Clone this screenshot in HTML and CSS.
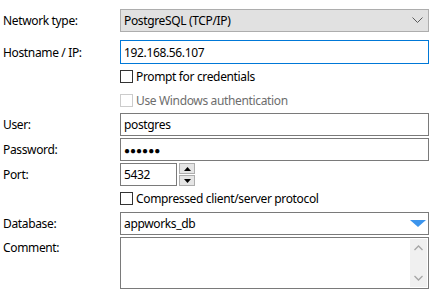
FILE: index.html
```html
<!DOCTYPE html>
<html lang="en">
<head>
    <meta charset="UTF-8">
    <title>Session settings</title>
    <link rel="stylesheet" href="styles.css">
</head>
<body>
    <div class="settings">
        <div class="row row-select">
            <label class="label">Network type:</label>
            <div class="combo">
                <span>PostgreSQL (TCP/IP)</span>
                <svg class="chevron" width="11" height="7" viewBox="0 0 11 7">
                    <polyline points="0.5,0.5 5.5,5.5 10.5,0.5" fill="none" stroke="#5a5a5a" stroke-width="1"/>
                </svg>
            </div>
        </div>
        <div class="row row-host">
            <label class="label">Hostname / IP:</label>
            <input class="field focused" type="text" value="192.168.56.107">
        </div>
        <div class="row check-row">
            <span class="check"></span>
            <span>Prompt for credentials</span>
        </div>
        <div class="row check-row disabled">
            <span class="check"></span>
            <span>Use Windows authentication</span>
        </div>
        <div class="row row-user">
            <label class="label">User:</label>
            <input class="field" type="text" value="postgres">
        </div>
        <div class="row row-pass">
            <label class="label">Password:</label>
            <div class="field dots">&#9679;&#9679;&#9679;&#9679;&#9679;&#9679;</div>
        </div>
        <div class="row row-port">
            <label class="label">Port:</label>
            <input class="field port" type="text" value="5432">
            <div class="spinner">
                <div class="spin-btn">
                    <svg width="7" height="4" viewBox="0 0 7 4"><polygon points="3.5,0 7,4 0,4" fill="#000"/></svg>
                </div>
                <div class="spin-btn">
                    <svg width="7" height="4" viewBox="0 0 7 4"><polygon points="0,0 7,0 3.5,4" fill="#000"/></svg>
                </div>
            </div>
        </div>
        <div class="row check-row row-compress">
            <span class="check"></span>
            <span>Compressed client/server protocol</span>
        </div>
        <div class="row row-db">
            <label class="label">Database:</label>
            <div class="field db">
                <span>appworks_db</span>
                <svg width="16" height="7" viewBox="0 0 16 7"><polygon points="0,0 16,0 8,7" fill="#3c94ec"/></svg>
            </div>
        </div>
        <div class="row row-comment">
            <label class="label">Comment:</label>
            <div class="field memo">
                <div class="scrollbar">
                    <svg width="9" height="6" viewBox="0 0 9 6"><polyline points="0.5,5 4.5,1 8.5,5" fill="none" stroke="#a6a6a6" stroke-width="1.3"/></svg>
                    <svg width="9" height="6" viewBox="0 0 9 6"><polyline points="0.5,1 4.5,5 8.5,1" fill="none" stroke="#a6a6a6" stroke-width="1.3"/></svg>
                </div>
            </div>
        </div>
    </div>
</body>
</html>
```

FILE: styles.css
```css
body {
    margin: 0;
    background-color: #fff;
    color: #000;
    font-family: "Noto Sans", "Liberation Sans", sans-serif;
    font-size: 12px;
    letter-spacing: -0.35px;
}

.settings {
    width: 426px;
    padding: 9px 3px 0 3px;
    display: flex;
    flex-direction: column;
}

.row {
    display: flex;
    align-items: center;
}

.label {
    width: 117px;
    flex-shrink: 0;
}

.combo,
.field {
    box-sizing: border-box;
    width: 309px;
    height: 23px;
    border: 1px solid #7a7a7a;
    background-color: #fff;
    padding: 0 0 0 3px;
    font-family: inherit;
    font-size: 12px;
    letter-spacing: inherit;
    color: #000;
    outline: none;
    margin: 0;
}

.combo {
    display: flex;
    align-items: center;
    justify-content: space-between;
    background-color: #e1e1e1;
    border-color: #adadad;
    padding-right: 5px;
}

.field.focused {
    border-color: #0078d7;
    height: 24px;
}

.row-host {
    margin-top: 8px;
}

.check-row {
    height: 24px;
    padding-left: 117px;
    gap: 3px;
}

.check {
    box-sizing: border-box;
    width: 13px;
    height: 13px;
    border: 1px solid #333;
    background-color: #fff;
}

.disabled {
    color: #6d6d6d;
}

.disabled .check {
    border-color: #cccccc;
}

.row-user {
    margin-top: 1px;
}

.row-pass,
.row-port {
    margin-top: 2px;
}

.dots {
    display: flex;
    align-items: center;
    font-size: 10px;
    letter-spacing: 0;
}

.field.port {
    width: 57px;
}

.spinner {
    margin-left: 2px;
    display: flex;
    flex-direction: column;
    gap: 1px;
}

.spin-btn {
    box-sizing: border-box;
    width: 16px;
    height: 11px;
    border: 1px solid #adadad;
    background-color: #e5e5e5;
    display: flex;
    align-items: center;
    justify-content: center;
}

.row-compress {
    height: 22px;
    margin-top: 1px;
}

.row-db {
    margin-top: 3px;
}

.db {
    display: flex;
    align-items: center;
    justify-content: space-between;
    padding-right: 2px;
}

.row-comment {
    margin-top: 2px;
    align-items: flex-start;
}

.row-comment .label {
    padding-top: 2px;
}

.memo {
    height: 52px;
    display: flex;
    justify-content: flex-end;
    padding: 1px;
}

.scrollbar {
    width: 17px;
    background-color: #f0f0f0;
    display: flex;
    flex-direction: column;
    justify-content: space-between;
    align-items: center;
    padding: 6px 0 6px 0;
}
```
